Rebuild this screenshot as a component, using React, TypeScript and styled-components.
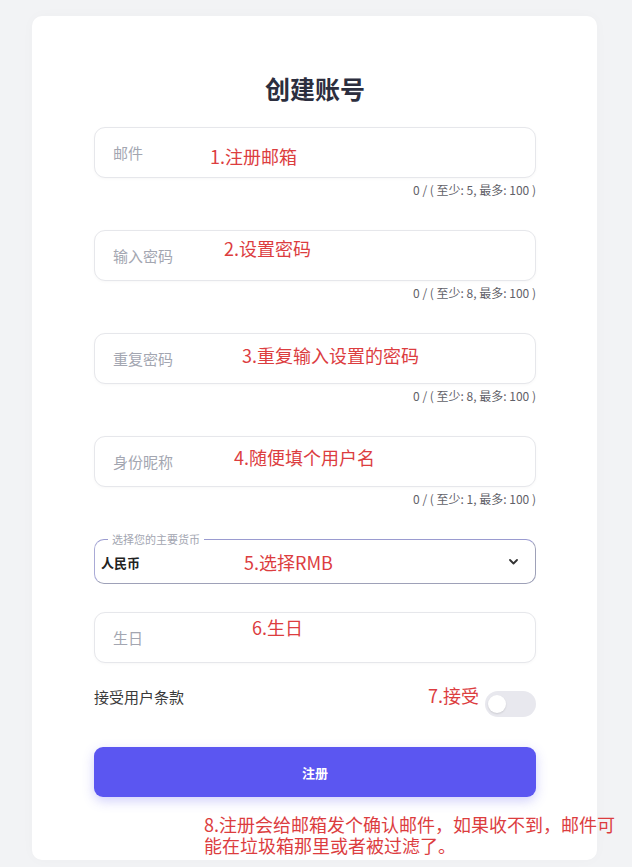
import React, { useState } from 'react';
import styled, { createGlobalStyle } from 'styled-components';

const GlobalStyle = createGlobalStyle`
  html, body {
    margin: 0;
    padding: 0;
    background: #f2f3f5;
    font-family: "Noto Sans CJK SC", "Noto Sans", sans-serif;
  }
  * { box-sizing: border-box; }
`;

const Page = styled.div`
  width: 632px;
  height: 867px;
  padding: 16px 35px 0 32px;
  overflow: hidden;
`;

const Card = styled.div`
  height: 844px;
  background: #ffffff;
  border-radius: 10px;
  padding: 55px 61px 0 62px;
  box-shadow: 0 0 14px rgba(0, 0, 0, 0.025);
`;

const Title = styled.h1`
  margin: 0 0 22px;
  text-align: center;
  font-size: 25px;
  line-height: 34px;
  font-weight: 700;
  color: #2c2e3e;
`;

const Form = styled.form`
  display: flex;
  flex-direction: column;
  gap: 28px;
`;

const Field = styled.div`
  position: relative;
`;

const TextInput = styled.input`
  display: block;
  width: 100%;
  height: 51px;
  padding: 0 18px;
  border: 1px solid #e6e7eb;
  border-radius: 11px;
  background: #fff;
  font-family: inherit;
  font-size: 15px;
  color: #333;
  outline: none;
  box-shadow: 0 1px 3px rgba(0, 0, 0, 0.03);
  &::placeholder {
    color: #a3a6b1;
  }
`;

const Counter = styled.div`
  margin: 5px 0 5px;
  text-align: right;
  font-size: 12px;
  line-height: 14px;
  color: #5f6168;
`;

const Note = styled.span<{ $left: number; $top: number }>`
  position: absolute;
  left: ${(p) => p.$left}px;
  top: ${(p) => p.$top}px;
  font-size: 18px;
  line-height: 22px;
  color: #dc3d3f;
  white-space: nowrap;
  pointer-events: none;
`;

const SelectBox = styled.fieldset`
  margin: -6px 0 0;
  padding: 0;
  border: 1px solid #9ea1b8;
  border-top-color: #9a9bd0;
  border-left-color: #a9aad6;
  border-radius: 10px;
  min-inline-size: 0;
`;

const Legend = styled.legend`
  margin-left: 13px;
  padding: 0 4px;
  font-size: 11px;
  line-height: 12px;
  color: #a3a6b1;
`;

const SelectRow = styled.div`
  position: relative;
  display: flex;
  align-items: center;
  justify-content: space-between;
  height: 34px;
  margin-bottom: 4px;
  padding: 0 17px 0 6px;
`;

const SelectValue = styled.span`
  font-size: 13px;
  font-weight: 600;
  color: #222;
`;

const TermsRow = styled.div`
  position: relative;
  display: flex;
  justify-content: space-between;
  align-items: flex-start;
  margin-top: -4px;
`;

const TermsLabel = styled.span`
  font-size: 15px;
  line-height: 20px;
  color: #3a3a3a;
`;

const Switch = styled.button<{ $on: boolean }>`
  position: relative;
  width: 51px;
  height: 26px;
  margin-top: 4px;
  padding: 0;
  border: none;
  border-radius: 13px;
  background: ${(p) => (p.$on ? '#5b56f0' : '#e8e8ee')};
  cursor: pointer;
`;

const Knob = styled.span<{ $on: boolean }>`
  position: absolute;
  top: 4px;
  left: ${(p) => (p.$on ? '29px' : '3px')};
  width: 18px;
  height: 18px;
  border-radius: 50%;
  background: #fff;
  box-shadow: 0 1px 2px rgba(0, 0, 0, 0.12);
`;

const SubmitWrap = styled.div`
  position: relative;
  margin-top: 2px;
`;

const SubmitButton = styled.button`
  display: block;
  width: 100%;
  height: 50px;
  border: none;
  border-radius: 9px;
  background: #5b56f1;
  color: #fff;
  font-family: inherit;
  font-size: 13px;
  font-weight: 700;
  box-shadow: 0 4px 12px rgba(91, 86, 241, 0.28);
  cursor: pointer;
`;

const BottomNote = styled.div`
  position: absolute;
  left: 110px;
  top: calc(100% + 17px);
  width: 425px;
  font-size: 18px;
  line-height: 21px;
  color: #dc3d3f;
`;

const fields = [
  { placeholder: '邮件', min: 5, note: '1.注册邮箱', left: 116, top: 18, type: 'email' },
  { placeholder: '输入密码', min: 8, note: '2.设置密码', left: 130, top: 7, type: 'password' },
  { placeholder: '重复密码', min: 8, note: '3.重复输入设置的密码', left: 148, top: 11, type: 'password' },
  { placeholder: '身份昵称', min: 1, note: '4.随便填个用户名', left: 140, top: 10, type: 'text' },
];

export default function App() {
  const [accepted, setAccepted] = useState(false);

  return (
    <>
      <GlobalStyle />
      <Page>
        <Card>
          <Title>创建账号</Title>

          <Form onSubmit={(e) => e.preventDefault()}>
            {fields.map((f) => (
              <Field key={f.placeholder}>
                <TextInput type={f.type} placeholder={f.placeholder} />
                <Counter>0 / ( 至少: {f.min}, 最多: 100 )</Counter>
                <Note $left={f.left} $top={f.top}>{f.note}</Note>
              </Field>
            ))}

            <SelectBox>
              <Legend>选择您的主要货币</Legend>
              <SelectRow>
                <SelectValue>人民币</SelectValue>
                <svg width="9" height="6" viewBox="0 0 9 6">
                  <polyline points="1,1 4.5,4.5 8,1" fill="none" stroke="#333" strokeWidth="1.8" strokeLinecap="round" strokeLinejoin="round" />
                </svg>
                <Note $left={149} $top={6}>5.选择RMB</Note>
              </SelectRow>
            </SelectBox>

            <Field>
              <TextInput placeholder="生日" />
              <Note $left={158} $top={4}>6.生日</Note>
            </Field>

            <TermsRow>
              <TermsLabel>接受用户条款</TermsLabel>
              <Switch type="button" $on={accepted} onClick={() => setAccepted(!accepted)} aria-label="接受用户条款">
                <Knob $on={accepted} />
              </Switch>
              <Note $left={334} $top={-3}>7.接受</Note>
            </TermsRow>

            <SubmitWrap>
              <SubmitButton type="submit">注册</SubmitButton>
              <BottomNote>8.注册会给邮箱发个确认邮件，如果收不到，邮件可能在垃圾箱那里或者被过滤了。</BottomNote>
            </SubmitWrap>
          </Form>
        </Card>
      </Page>
    </>
  );
}
